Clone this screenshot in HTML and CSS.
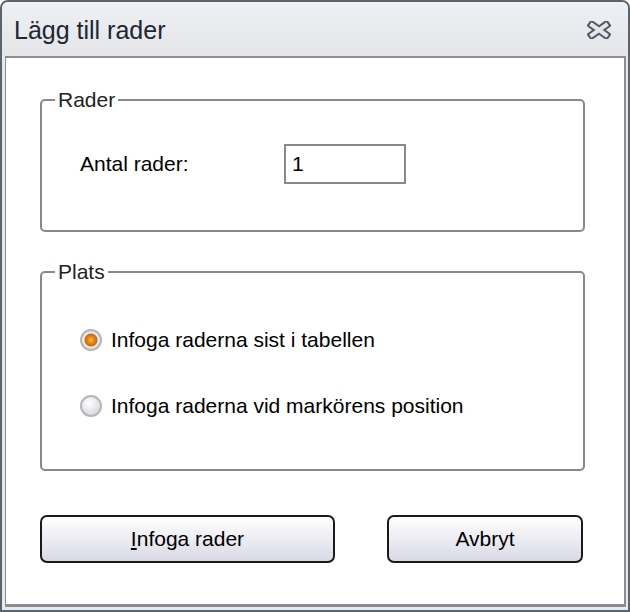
FILE: index.html
```html
<!DOCTYPE html>
<html lang="sv">
<head>
    <meta charset="UTF-8">
    <title>Lägg till rader</title>
    <link rel="stylesheet" href="styles.css">
</head>
<body>
    <div class="window">
        <div class="titlebar">
            <span class="title">Lägg till rader</span>
            <svg class="close" width="24" height="18" viewBox="0 0 24 18">
                <path d="M5 4 L19 14 M19 4 L5 14" stroke="#4e5866" stroke-width="8" stroke-linecap="square"/>
                <path d="M5 4 L19 14 M19 4 L5 14" stroke="#e4e6ea" stroke-width="4" stroke-linecap="square"/>
            </svg>
        </div>

        <div class="content">
            <div class="group group-rader">
                <div class="group-title">Rader</div>
                <div class="field-row">
                    <label class="field-label">Antal rader:</label>
                    <div class="textbox">1</div>
                </div>
            </div>

            <div class="group group-plats">
                <div class="group-title">Plats</div>
                <div class="radio-row">
                    <span class="radio checked"></span>
                    <span>Infoga raderna sist i tabellen</span>
                </div>
                <div class="radio-row second">
                    <span class="radio"></span>
                    <span>Infoga raderna vid markörens position</span>
                </div>
            </div>

            <div class="buttons">
                <button class="btn btn-insert"><u>I</u>nfoga rader</button>
                <button class="btn btn-cancel">Avbryt</button>
            </div>
        </div>
    </div>
</body>
</html>
```

FILE: styles.css
```css
body {
    margin: 0;
    background: #fff;
}

.window {
    width: 630px;
    height: 612px;
    box-sizing: border-box;
    border: 2px solid #5b646d;
    border-radius: 8px 8px 0 0;
    background: #e8e9ed;
    display: flex;
    flex-direction: column;
}

.titlebar {
    height: 54px;
    display: flex;
    align-items: center;
    justify-content: space-between;
    padding: 0 17px 0 12px;
    background: linear-gradient(to bottom, #eef0f3, #e3e5e9);
    border-radius: 6px 6px 0 0;
}

.title {
    font-family: "Liberation Sans", Arial, sans-serif;
    font-size: 25px;
    color: #1e2733;
    margin-top: 2px;
}

.close {
    margin-top: 1px;
}

.content {
    flex: 1;
    margin: 0 2px 3px 3px;
    background: #fff;
    border-top: 2px solid #8a8e94;
    border-left: 1px solid #8a8e94;
    border-right: 2px solid #8a8e94;
    border-bottom: 3px solid #8a8e94;
    padding: 0 39px 0 34px;
    font-family: "Liberation Sans", Arial, sans-serif;
    font-size: 21px;
    color: #000;
}

.group {
    border: 2px solid #868a90;
    border-radius: 5px;
}

.group-rader {
    margin-top: 41px;
    padding: 0 0 46px 38px;
}

.group-plats {
    margin-top: 39px;
    padding: 0 0 48px 38px;
}

.group-title {
    width: fit-content;
    margin: -13px 0 0 -25px;
    padding: 0 3px;
    background: #fff;
    line-height: 24px;
    color: #222;
}

.field-row {
    display: flex;
    align-items: center;
    margin-top: 32px;
}

.field-label {
    width: 204px;
}

.textbox {
    width: 122px;
    height: 40px;
    box-sizing: border-box;
    border: 2px solid #868a90;
    padding-left: 6px;
    line-height: 36px;
}

.radio-row {
    display: flex;
    align-items: center;
    gap: 9px;
    height: 30px;
    margin-top: 41px;
}

.radio-row.second {
    margin-top: 36px;
}

.radio {
    width: 22px;
    height: 22px;
    box-sizing: border-box;
    border-radius: 50%;
    border: 2px solid #b4b6ba;
    background: radial-gradient(circle at 40% 35%, #ffffff, #dcdde0 70%);
    flex: none;
}

.radio.checked {
    background: radial-gradient(circle, #f9bb48 0, #e88a1a 3px, #c96a0c 6px, #f3f3f3 7px, #dcdde0 9px);
}

.buttons {
    display: flex;
    justify-content: space-between;
    margin: 44px 2px 0 0;
}

.btn {
    height: 48px;
    border: 2px solid #1a1a1a;
    border-radius: 7px;
    background: linear-gradient(to bottom, #ffffff, #d9d9e6);
    font-family: inherit;
    font-size: 21px;
    color: #000;
    padding: 0;
}

.btn-insert {
    width: 295px;
}

.btn-cancel {
    width: 196px;
}
```
